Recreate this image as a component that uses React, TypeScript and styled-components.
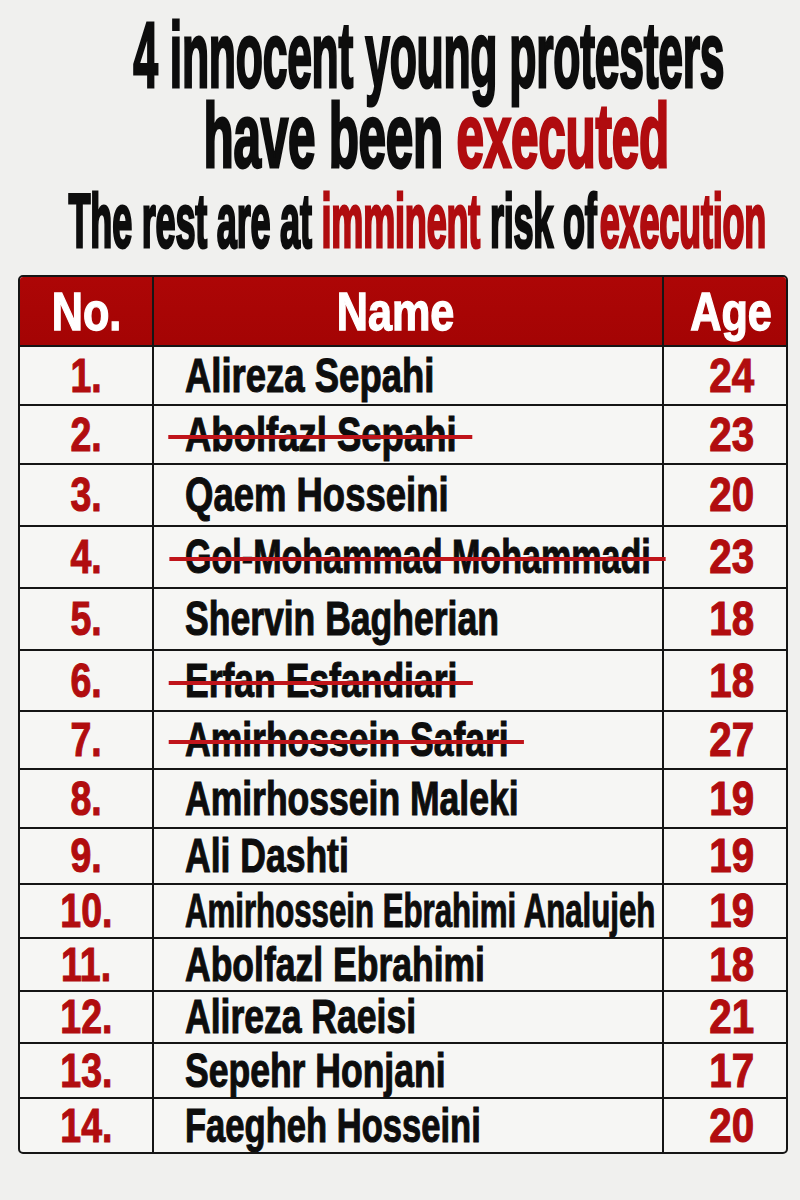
import styled, { createGlobalStyle, css } from "styled-components";

const GlobalStyle = createGlobalStyle`
  html, body {
    margin: 0;
    padding: 0;
    background: #f0f0ee;
  }
  body {
    font-family: "Liberation Sans", Arial, sans-serif;
    font-weight: bold;
    overflow-x: hidden;
  }
`;

type Person = {
  name: string;
  age: number;
  h: number; // row height incl. bottom rule
  executed?: boolean;
  fit?: number;
};

const people: Person[] = [
  { name: "Alireza Sepahi", age: 24, h: 59, fit: 0.76 },
  { name: "Abolfazl Sepahi", age: 23, h: 59, executed: true, fit: 0.76 },
  { name: "Qaem Hosseini", age: 20, h: 62, fit: 0.76 },
  { name: "Gol-Mohammad Mohammadi", age: 23, h: 62, executed: true, fit: 0.71 },
  { name: "Shervin Bagherian", age: 18, h: 62 },
  { name: "Erfan Esfandiari", age: 18, h: 61, executed: true },
  { name: "Amirhossein Safari", age: 27, h: 58, executed: true },
  { name: "Amirhossein Maleki", age: 19, h: 59 },
  { name: "Ali Dashti", age: 19, h: 56 },
  { name: "Amirhossein Ebrahimi Analujeh", age: 19, h: 54, fit: 0.65 },
  { name: "Abolfazl Ebrahimi", age: 18, h: 53 },
  { name: "Alireza Raeisi", age: 21, h: 52 },
  { name: "Sepehr Honjani", age: 17, h: 55 },
  { name: "Faegheh Hosseini", age: 20, h: 53, fit: 0.72 },
];

const App = () => {
  return (
    <Page>
      <GlobalStyle />
      <Title>
        <Line $size={92} $lh={81} $shift={29}>
          <Squeeze $x={0.483}>4 innocent young protesters</Squeeze>
        </Line>
        <Line $size={90} $lh={81} $shift={36}>
          <Squeeze $x={0.55}>
            have been <Red>executed</Red>
          </Squeeze>
        </Line>
        <Line $size={76} $lh={88} $shift={17}>
          <Squeeze $x={0.475}>
            The rest are at <Red>imminent</Red> risk of<Gap /> <Red>execution</Red>
          </Squeeze>
        </Line>
      </Title>

      <Table>
        <HeadRow>
          <NoCell>
            <HeadText>No.</HeadText>
          </NoCell>
          <HeadNameCell>
            <HeadText>Name</HeadText>
          </HeadNameCell>
          <AgeCell>
            <HeadText>Age</HeadText>
          </AgeCell>
        </HeadRow>
        {people.map((p, i) => (
          <Row key={p.name} $h={p.h}>
            <NoCell>
              <Num>{i + 1}.</Num>
            </NoCell>
            <NameCell>
              <NameText $fit={p.fit ?? 0.74} $struck={p.executed}>
                {p.name}
              </NameText>
            </NameCell>
            <AgeCell>
              <Num $age>{p.age}</Num>
            </AgeCell>
          </Row>
        ))}
      </Table>
    </Page>
  );
};

const Page = styled.div`
  width: 800px;
  height: 1200px;
  overflow: hidden;
  background: #f0f0ee;
`;

const Title = styled.div`
  padding-top: 15px;
  overflow: hidden;
  color: #0d0d0d;
`;

const Line = styled.div<{ $size: number; $lh: number; $shift: number }>`
  display: flex;
  justify-content: center;
  padding-left: ${(p) => p.$shift * 2}px;
  font-size: ${(p) => p.$size}px;
  line-height: ${(p) => p.$lh}px;
  letter-spacing: -0.5px;
`;

const Squeeze = styled.span<{ $x: number }>`
  display: inline-block;
  flex-shrink: 0;
  white-space: nowrap;
  transform: scaleX(${(p) => p.$x});
  -webkit-text-stroke: 3px currentColor;
`;

// "of" and "execution" sit almost touching in the poster
const Gap = styled.span`
  margin-right: -14px;
`;

const Red = styled.span`
  color: #b00c0f;
`;

const Table = styled.div`
  margin: 10px 0 0 18px;
  width: 766px;
  border: 2px solid #151515;
  border-radius: 5px;
  overflow: hidden;
  display: flex;
  flex-direction: column;
  background: #f6f6f4;
`;

const Row = styled.div<{ $h: number }>`
  display: grid;
  grid-template-columns: 134px 510px 1fr;
  height: ${(p) => p.$h}px;
  box-sizing: border-box;
  border-bottom: 2px solid #151515;

  &:last-child {
    border-bottom: none;
  }
`;

const HeadRow = styled(Row).attrs({ $h: 70 })`
  background: linear-gradient(180deg, #ad0606 0%, #a40404 100%);
  color: #fff;
`;

const Cell = styled.div`
  display: flex;
  align-items: center;
  justify-content: center;
  box-sizing: border-box;
  border-right: 2px solid #151515;
  min-width: 0;
`;

const NoCell = styled(Cell)``;

const NameCell = styled(Cell)`
  justify-content: flex-start;
  padding-left: 31px;
`;

const HeadNameCell = styled(Cell)`
  padding-right: 24px;
`;

const AgeCell = styled(Cell)`
  border-right: none;
  padding-left: 13px;
`;

const HeadText = styled.span`
  display: inline-block;
  flex-shrink: 0;
  white-space: nowrap;
  font-size: 54px;
  line-height: 54px;
  transform: scaleX(0.8);
  -webkit-text-stroke: 1.4px #fff;
`;

const Num = styled.span<{ $age?: boolean }>`
  display: inline-block;
  flex-shrink: 0;
  white-space: nowrap;
  font-size: 48px;
  line-height: 48px;
  color: #b10d0f;
  transform: scaleX(${(p) => (p.$age ? 0.84 : 0.78)});
  -webkit-text-stroke: 1.1px #b10d0f;
`;

const NameText = styled.span<{ $fit: number; $struck?: boolean }>`
  position: relative;
  display: inline-block;
  flex-shrink: 0;
  white-space: nowrap;
  font-size: 48px;
  line-height: 48px;
  color: #0d0d0d;
  transform: scaleX(${(p) => p.$fit});
  transform-origin: left center;
  -webkit-text-stroke: 1.1px #0d0d0d;

  ${(p) =>
    p.$struck &&
    css`
      &::after {
        content: "";
        position: absolute;
        left: -22px;
        right: -21px;
        top: 24px;
        height: 4px;
        background: #c0141a;
      }
    `}
`;

export default App;
